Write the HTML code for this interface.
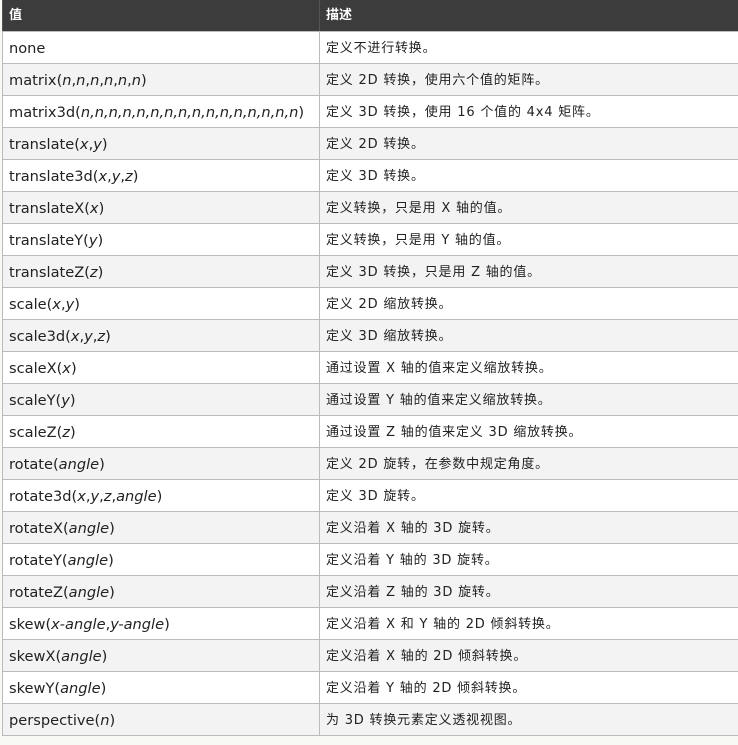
<!DOCTYPE html>
<html><head><meta charset="utf-8"><style>
html,body{margin:0;padding:0;background:#f8f8f4;width:738px;height:745px;overflow:hidden}
table{border-collapse:collapse;width:740px;margin-left:2px;font-family:"DejaVu Sans","Noto Sans CJK SC",sans-serif;font-size:14.6px;color:#222;table-layout:fixed}
th{background:#3c3c3c;color:#fff;text-align:left;height:31px;line-height:31px;padding:0 0 0 6px;font-weight:bold;font-size:13px;border-bottom:1px solid #bbb;border-left:1px solid #555;vertical-align:middle}
td{height:31px;line-height:31px;padding:0 0 0 6px;border:1px solid #bbb;border-top:none;background:#fff;white-space:nowrap;vertical-align:middle;position:relative}
tr:nth-child(odd) td{background:#f3f3f3}
td:nth-child(2){font-family:"DejaVu Sans","Noto Sans CJK SC",sans-serif;font-size:13px;letter-spacing:0.8px}
td>div{height:31px;overflow:hidden;position:relative;top:1px}
i{font-style:italic}
</style></head><body>
<table>
<colgroup><col style="width:317px"><col></colgroup>
<tr><th>值</th><th>描述</th></tr>
<tr><td><div>none</div></td><td><div>定义不进行转换。</div></td></tr>
<tr><td><div>matrix(<i>n</i>,<i>n</i>,<i>n</i>,<i>n</i>,<i>n</i>,<i>n</i>)</div></td><td><div>定义 2D 转换，使用六个值的矩阵。</div></td></tr>
<tr><td><div>matrix3d(<i>n,n,n,n,n,n,n,n,n,n,n,n,n,n,n,n</i>)</div></td><td><div>定义 3D 转换，使用 16 个值的 4x4 矩阵。</div></td></tr>
<tr><td><div>translate(<i>x</i>,<i>y</i>)</div></td><td><div>定义 2D 转换。</div></td></tr>
<tr><td><div>translate3d(<i>x</i>,<i>y</i>,<i>z</i>)</div></td><td><div>定义 3D 转换。</div></td></tr>
<tr><td><div>translateX(<i>x</i>)</div></td><td><div>定义转换，只是用 X 轴的值。</div></td></tr>
<tr><td><div>translateY(<i>y</i>)</div></td><td><div>定义转换，只是用 Y 轴的值。</div></td></tr>
<tr><td><div>translateZ(<i>z</i>)</div></td><td><div>定义 3D 转换，只是用 Z 轴的值。</div></td></tr>
<tr><td><div>scale(<i>x</i>,<i>y</i>)</div></td><td><div>定义 2D 缩放转换。</div></td></tr>
<tr><td><div>scale3d(<i>x</i>,<i>y</i>,<i>z</i>)</div></td><td><div>定义 3D 缩放转换。</div></td></tr>
<tr><td><div>scaleX(<i>x</i>)</div></td><td><div>通过设置 X 轴的值来定义缩放转换。</div></td></tr>
<tr><td><div>scaleY(<i>y</i>)</div></td><td><div>通过设置 Y 轴的值来定义缩放转换。</div></td></tr>
<tr><td><div>scaleZ(<i>z</i>)</div></td><td><div>通过设置 Z 轴的值来定义 3D 缩放转换。</div></td></tr>
<tr><td><div>rotate(<i>angle</i>)</div></td><td><div>定义 2D 旋转，在参数中规定角度。</div></td></tr>
<tr><td><div>rotate3d(<i>x</i>,<i>y</i>,<i>z</i>,<i>angle</i>)</div></td><td><div>定义 3D 旋转。</div></td></tr>
<tr><td><div>rotateX(<i>angle</i>)</div></td><td><div>定义沿着 X 轴的 3D 旋转。</div></td></tr>
<tr><td><div>rotateY(<i>angle</i>)</div></td><td><div>定义沿着 Y 轴的 3D 旋转。</div></td></tr>
<tr><td><div>rotateZ(<i>angle</i>)</div></td><td><div>定义沿着 Z 轴的 3D 旋转。</div></td></tr>
<tr><td><div>skew(<i>x-angle</i>,<i>y-angle</i>)</div></td><td><div>定义沿着 X 和 Y 轴的 2D 倾斜转换。</div></td></tr>
<tr><td><div>skewX(<i>angle</i>)</div></td><td><div>定义沿着 X 轴的 2D 倾斜转换。</div></td></tr>
<tr><td><div>skewY(<i>angle</i>)</div></td><td><div>定义沿着 Y 轴的 2D 倾斜转换。</div></td></tr>
<tr><td><div>perspective(<i>n</i>)</div></td><td><div>为 3D 转换元素定义透视视图。</div></td></tr>
</table>
</body></html>
